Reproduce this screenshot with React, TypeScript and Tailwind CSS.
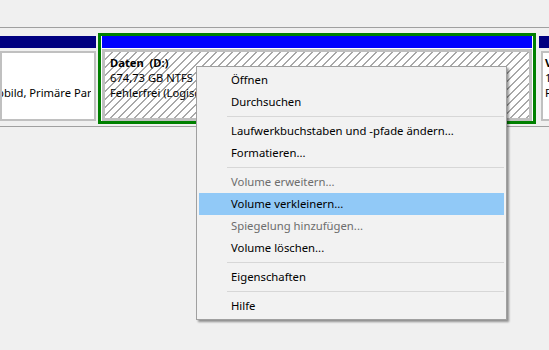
import React from "react";

type Item =
  | { kind: "item"; label: string; disabled?: boolean; active?: boolean }
  | { kind: "sep" };

const items: Item[] = [
  { kind: "item", label: "Öffnen" },
  { kind: "item", label: "Durchsuchen" },
  { kind: "sep" },
  { kind: "item", label: "Laufwerkbuchstaben und -pfade ändern..." },
  { kind: "item", label: "Formatieren..." },
  { kind: "sep" },
  { kind: "item", label: "Volume erweitern...", disabled: true },
  { kind: "item", label: "Volume verkleinern...", active: true },
  { kind: "item", label: "Spiegelung hinzufügen...", disabled: true },
  { kind: "item", label: "Volume löschen..." },
  { kind: "sep" },
  { kind: "item", label: "Eigenschaften" },
  { kind: "sep" },
  { kind: "item", label: "Hilfe" },
];

export default function App() {
  return (
    <div className="relative w-[549px] h-[350px] overflow-hidden bg-[#f0f0f0] font-['Noto_Sans',sans-serif] text-black">
      <div className="h-[27px]" />
      <div className="h-px bg-[#a0a0a0]" />

      {/* disk row */}
      <div className="flex h-[98px] pt-[5px] text-[11.2px] leading-[15px]">
        {/* left partition (clipped) */}
        <div className="w-[96px] shrink-0 pt-[3px]">
          <div className="h-[12px] bg-[#000080]" />
          <div className="mt-[3px] h-[70px] border-2 border-[#c0c0c0] bg-white pt-[2px] overflow-hidden">
            <div className="h-[15px]" />
            <div className="h-[15px]" />
            <div className="mr-[3px] overflow-hidden whitespace-nowrap">
              <span className="inline-block -ml-[5px]">bbild, Primäre Partition</span>
            </div>
          </div>
        </div>

        {/* Daten (D:) */}
        <div className="ml-[2px] w-[438px] h-[91px] shrink-0 border-[3px] border-[#008000] px-[1px] bg-white">
          <div className="h-[12px] bg-[#0000ff]" />
          <div className="mt-px h-[72px] border-[3px] border-[#c0c0c0] bg-[repeating-linear-gradient(135deg,#ffffff_0px,#ffffff_4.6px,#a8a8a8_4.6px,#a8a8a8_5.66px)] pt-[3px] pl-[5px] whitespace-nowrap overflow-hidden">
            <div className="font-bold whitespace-pre">Daten  (D:)</div>
            <div>674,73 GB NTFS</div>
            <div>Fehlerfrei (Logisches Laufwerk)</div>
          </div>
        </div>

        {/* right partition (clipped) */}
        <div className="ml-[3px] flex-1 pt-[3px] overflow-hidden">
          <div className="h-[12px] bg-[#000080]" />
          <div className="mt-[3px] ml-[2px] h-[70px] border-2 border-[#c0c0c0] border-r-0 bg-white pt-[2px] pl-[2px] whitespace-nowrap overflow-hidden">
            <div className="font-bold">Volume (E:)</div>
            <div>1,00 TB NTFS</div>
            <div>Fehlerfrei (Logisches Laufwerk)</div>
          </div>
        </div>
      </div>
      <div className="h-px bg-[#a0a0a0]" />

      {/* context menu */}
      <div className="absolute left-[196px] top-[66px] w-[311px] border border-[#a0a0a0] bg-[#f2f2f2] p-[2px] shadow-[2px_2px_2px_rgba(0,0,0,0.4)] text-[11.3px]">
        {items.map((it, i) =>
          it.kind === "sep" ? (
            <div key={i} className="h-[7px] pt-[3px] pl-[28px]">
              <div className="h-px bg-[#d7d7d7]" />
            </div>
          ) : (
            <div
              key={i}
              className={
                "h-[22px] flex items-center pl-[32px] whitespace-nowrap " +
                (it.active ? "bg-[#91c9f7] " : "") +
                (it.disabled ? "text-[#6d6d6d]" : "text-black")
              }
            >
              {it.label}
            </div>
          )
        )}
      </div>
    </div>
  );
}
